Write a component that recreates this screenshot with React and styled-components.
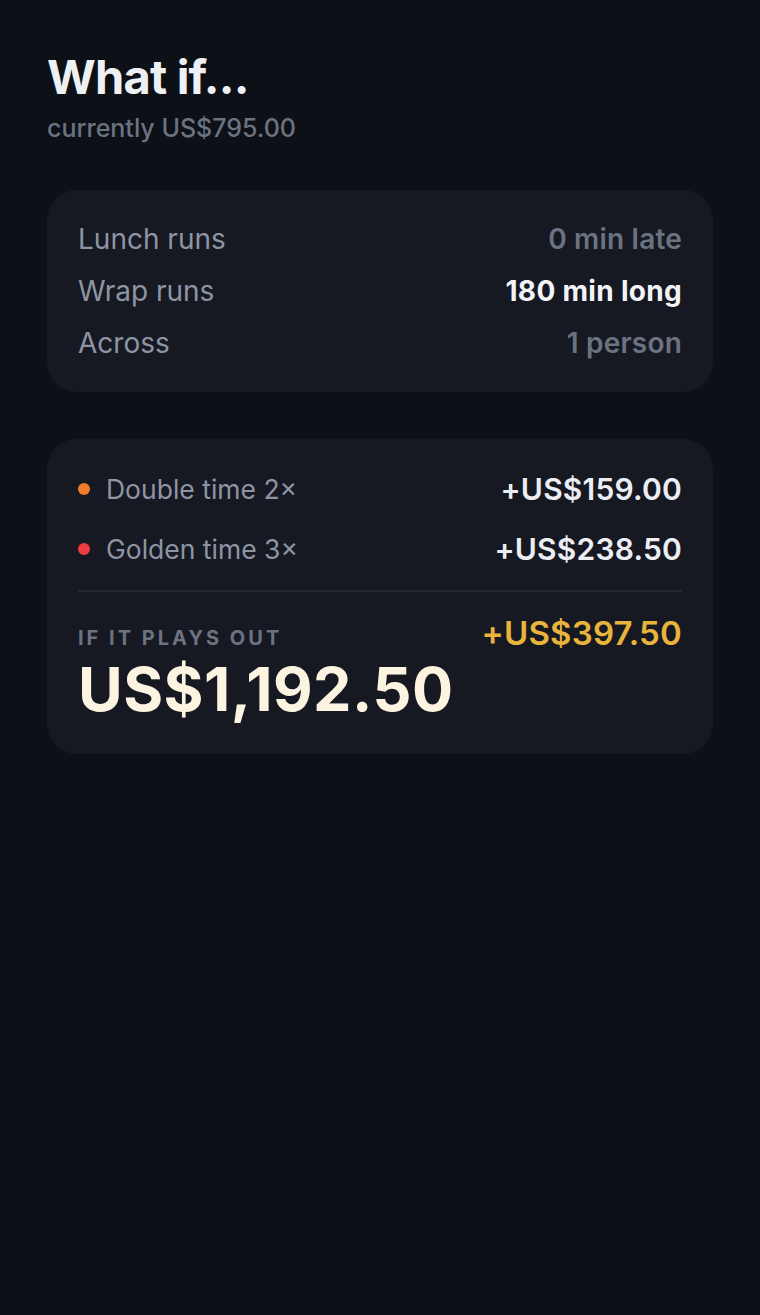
import React from "react";
import styled, { createGlobalStyle } from "styled-components";

const Global = createGlobalStyle`
  html, body { margin: 0; padding: 0; background: #0d1016; }
  body { font-family: Inter, "Noto Sans", sans-serif; -webkit-font-smoothing: antialiased; }
`;

const Page = styled.div`
  min-height: 1315px;
  background: #0d1016;
  padding: 50px 47px 0 47px;
  box-sizing: border-box;
  display: flex;
  flex-direction: column;
`;

const Title = styled.h1`
  margin: 0;
  font-size: 47px;
  font-weight: 700;
  color: #eef0f4;
  letter-spacing: -0.8px;
  line-height: 54px;
`;

const Sub = styled.div`
  margin-top: 10px;
  font-size: 25px;
  font-weight: 500;
  color: #6b7380;
  line-height: 28px;
`;

const Card = styled.section`
  background: #161922;
  border-radius: 30px;
  padding: ${(p) => p.$pad};
  margin-top: ${(p) => p.$mt}px;
  display: flex;
  flex-direction: column;
`;

const Row = styled.div`
  display: flex;
  align-items: center;
  justify-content: space-between;
  height: ${(p) => p.$h}px;
`;

const Label = styled.span`
  font-size: ${(p) => p.$size || 28}px;
  color: #8d95a3;
  font-weight: 400;
  display: flex;
  align-items: center;
`;

const Value = styled.span`
  font-size: 28px;
  font-weight: ${(p) => (p.$strong ? 700 : 600)};
  color: ${(p) => (p.$strong ? "#f3f4f7" : "#6b7380")};
  letter-spacing: ${(p) => (p.$strong ? "0.3px" : "0.2px")};
`;

const Dot = styled.span`
  width: 12px;
  height: 12px;
  border-radius: 50%;
  background: ${(p) => p.$c};
  margin: 0 16px 0 0;
  flex: none;
`;

const Money = styled.span`
  font-size: 30px;
  font-weight: 600;
  color: #eceef3;
  letter-spacing: 0.2px;
`;

const Divider = styled.div`
  height: 2px;
  background: #22262f;
  margin: 12px 0 0;
`;

const TotalWrap = styled.div`
  display: flex;
  justify-content: space-between;
  align-items: flex-start;
  margin-top: 26px;
`;

const TotalLeft = styled.div`
  display: flex;
  flex-direction: column;
`;

const Caps = styled.div`
  font-size: 20px;
  font-weight: 700;
  letter-spacing: 3px;
  color: #6b7380;
  line-height: 24px;
  margin-top: 8px;
`;

const Big = styled.div`
  font-size: 61px;
  font-weight: 700;
  color: #fdf3e1;
  line-height: 70px;
  margin-top: 4px;
  letter-spacing: 0.5px;
`;

const Delta = styled.div`
  font-size: 33px;
  font-weight: 600;
  color: #e9b43c;
  line-height: 36px;
  margin-top: -3px;
  letter-spacing: 0.2px;
`;

export default function App() {
  return (
    <>
      <Global />
      <Page>
        <Title>What if...</Title>
        <Sub>currently US$795.00</Sub>

        <Card $mt={48} $pad="23px 31px 23px 31px">
          <Row $h={52}>
            <Label>Lunch runs</Label>
            <Value>0 min late</Value>
          </Row>
          <Row $h={52}>
            <Label>Wrap runs</Label>
            <Value $strong>180 min long</Value>
          </Row>
          <Row $h={52}>
            <Label>Across</Label>
            <Value>1 person</Value>
          </Row>
        </Card>

        <Card $mt={47} $pad="20px 31px 30px 31px">
          <Row $h={60}>
            <Label $size={26.5}>
              <Dot $c="#f27c2a" />
              Double time 2×
            </Label>
            <Money>+US$159.00</Money>
          </Row>
          <Row $h={59}>
            <Label $size={26.5}>
              <Dot $c="#ef3c44" />
              Golden time 3×
            </Label>
            <Money>+US$238.50</Money>
          </Row>
          <Divider />
          <TotalWrap>
            <TotalLeft>
              <Caps>IF IT PLAYS OUT</Caps>
              <Big>US$1,192.50</Big>
            </TotalLeft>
            <Delta>+US$397.50</Delta>
          </TotalWrap>
        </Card>
      </Page>
    </>
  );
}
